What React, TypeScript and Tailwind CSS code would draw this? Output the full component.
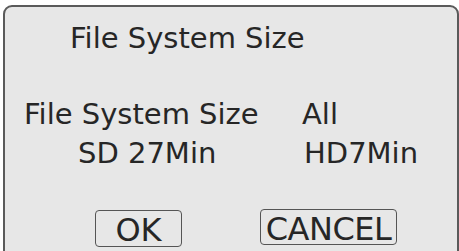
export default function App() {
  const font = { fontFamily: '"DejaVu Sans", sans-serif' };
  return (
    <div className="w-[459px] h-[251px] overflow-hidden bg-white pt-[5px] pl-[3px]" style={font}>
      <div className="w-[456px] h-[270px] rounded-[9px] border-2 border-[#5a5a5a] bg-[#e7e7e7] text-[#262626]">
        <div className="pt-[17px] pl-[65px] text-[29px] leading-[29px]">File System Size</div>

        <div className="mt-[47px] pl-[19px] flex text-[29px] leading-[29px]">
          <span className="w-[278px]">File System Size</span>
          <span>All</span>
        </div>

        <div className="mt-[10px] pl-[73px] flex text-[29px] leading-[29px]">
          <span className="w-[226px]">SD 27Min</span>
          <span>HD7Min</span>
        </div>

        <div className="mt-[42px] pl-[90px] flex items-start gap-[78px]">
          <div className="w-[87px] h-[37px] border border-[#555] rounded-[4px] pt-[3px] text-center text-[32px] leading-[32px]">
            OK
          </div>
          <div className="w-[137px] h-[36px] -mt-px border border-[#555] rounded-[4px] pt-[3px] text-center text-[32px] leading-[32px] tracking-[-0.5px]">
            CANCEL
          </div>
        </div>
      </div>
    </div>
  );
}
